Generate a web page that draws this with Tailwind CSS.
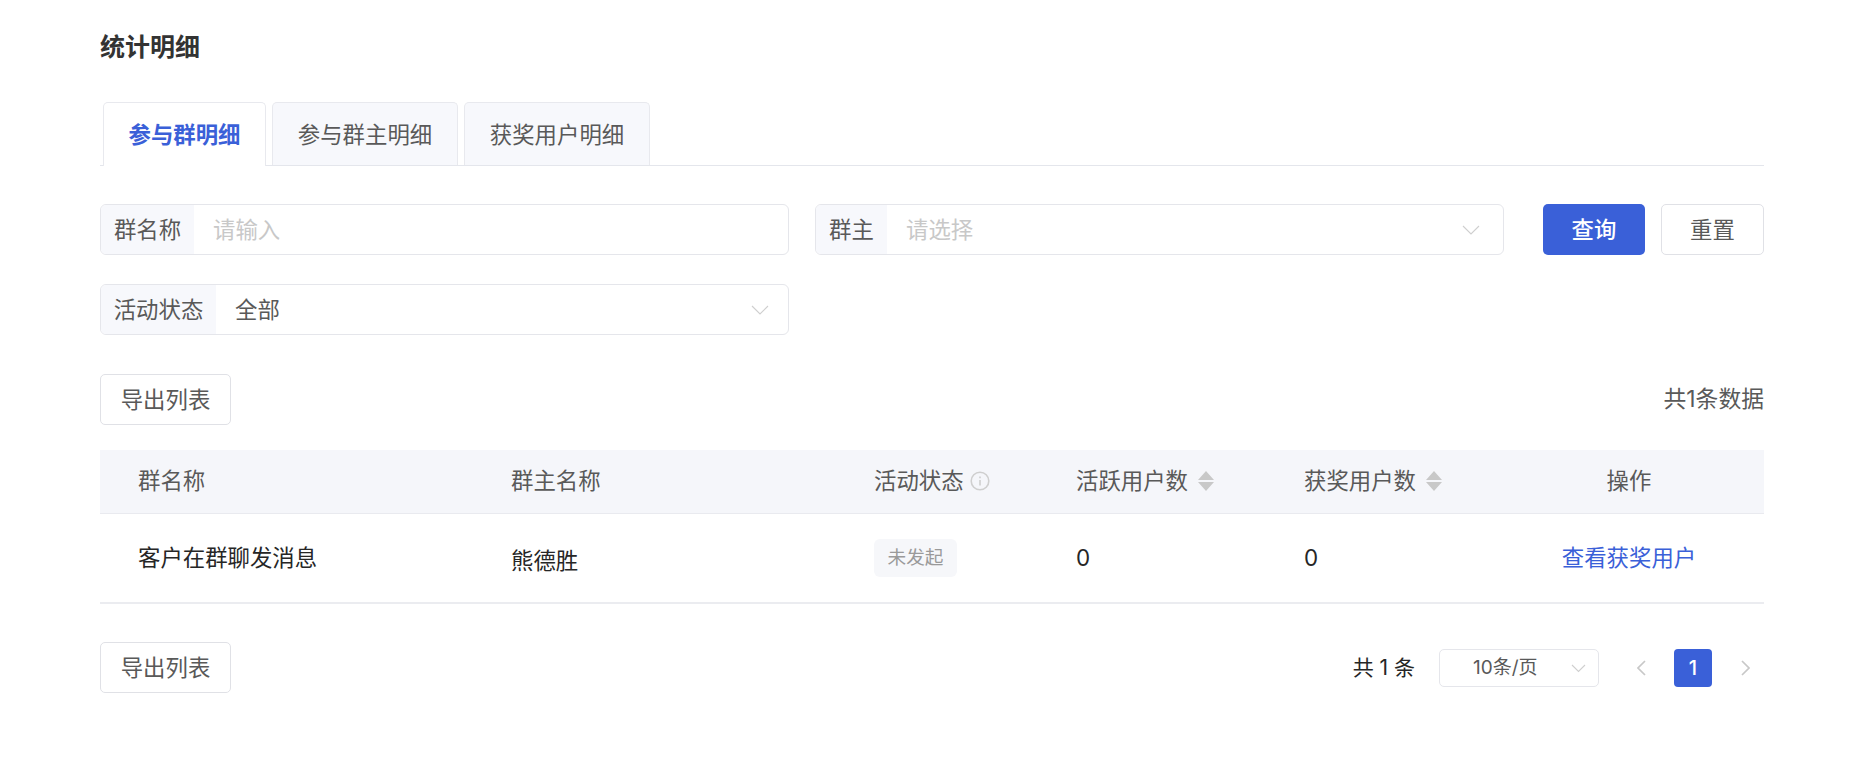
<!DOCTYPE html>
<html lang="zh-CN">
<head>
    <meta charset="UTF-8">
    <title>统计明细</title>
    <script src="https://cdn.jsdelivr.net/npm/@tailwindcss/browser@4"></script>
</head>
<body class="bg-white font-['Inter','Noto_Sans_CJK_SC',sans-serif] text-[22.4px] text-[#595959]">
    <div class="ml-[100px] w-[1664px] pt-[31px]">
        <h1 class="h-[32px] text-[25px] leading-[32px] font-semibold text-[#333333]">统计明细</h1>

        <!-- Tabs -->
        <div class="mt-[39px] flex h-[64px] gap-[6px] border-b border-[#e4e6ec] pl-[3px]">
            <div class="relative h-[64px] w-[163px] rounded-t-[5px] border border-b-0 border-[#e8e9ee] bg-white text-center leading-[64px] font-semibold text-[#3a60d8]">参与群明细</div>
            <div class="h-[63px] w-[186px] rounded-t-[5px] border border-b-0 border-[#e8e9ee] bg-[#f7f8fc] text-center leading-[64px]">参与群主明细</div>
            <div class="h-[63px] w-[186px] rounded-t-[5px] border border-b-0 border-[#e8e9ee] bg-[#f7f8fc] text-center leading-[64px]">获奖用户明细</div>
        </div>

        <!-- Filters -->
        <div class="mt-[38px] flex h-[51px]">
            <div class="flex w-[689px] overflow-hidden rounded-[6px] border border-[#e5e6eb]">
                <div class="flex w-[93px] items-center justify-center bg-[#f7f8fc]">群名称</div>
                <div class="flex flex-1 items-center pl-[19px] text-[#c8c8c8]">请输入</div>
            </div>
            <div class="ml-[26px] flex w-[689px] overflow-hidden rounded-[6px] border border-[#e5e6eb]">
                <div class="flex w-[71px] items-center justify-center bg-[#f7f8fc]">群主</div>
                <div class="flex flex-1 items-center justify-between pr-[22px] pl-[19px] text-[#c8c8c8]">
                    <span>请选择</span>
                    <svg width="20" height="12" viewBox="0 0 20 12" fill="none" stroke="#cfcfcf" stroke-width="1.1"><path d="M2 2l8 8 8-8"/></svg>
                </div>
            </div>
            <button class="ml-[39px] h-[51px] w-[102px] rounded-[5px] bg-[#3a60d8] font-medium text-white">查询</button>
            <button class="ml-[16px] h-[51px] w-[103px] rounded-[5px] border border-[#e0e1e6] bg-white">重置</button>
        </div>
        <div class="mt-[29px] flex h-[51px] w-[689px] overflow-hidden rounded-[6px] border border-[#e5e6eb]">
            <div class="flex w-[115px] items-center justify-center bg-[#f7f8fc]">活动状态</div>
            <div class="flex flex-1 items-center justify-between pr-[18px] pl-[19px]">
                <span>全部</span>
                <svg width="20" height="12" viewBox="0 0 20 12" fill="none" stroke="#cfcfcf" stroke-width="1.1"><path d="M2 2l8 8 8-8"/></svg>
            </div>
        </div>

        <div class="mt-[39px] flex h-[51px] items-center justify-between">
            <button class="h-[51px] w-[131px] rounded-[5px] border border-[#e0e1e6] bg-white">导出列表</button>
            <span class="text-[22.8px]">共1条数据</span>
        </div>

        <!-- Table -->
        <table class="mt-[25px] w-full table-fixed border-collapse">
            <colgroup>
                <col class="w-[373px]"><col class="w-[364px]"><col class="w-[201px]"><col class="w-[228px]"><col class="w-[228px]"><col class="w-[270px]">
            </colgroup>
            <thead>
                <tr class="h-[63px] border-b border-[#e9eaef] bg-[#f5f6fa] text-left">
                    <th class="pl-[38px] font-normal">群名称</th>
                    <th class="pl-[38px] font-normal">群主名称</th>
                    <th class="pl-[37px] font-normal">
                        <span class="flex items-center gap-[6px]">活动状态
                            <svg width="20" height="20" viewBox="0 0 20 20" fill="none" stroke="#cfcfcf" stroke-width="1.6"><circle cx="10" cy="10" r="8.8"/><path d="M10 9v5.5M10 5.5v1.7"/></svg>
                        </span>
                    </th>
                    <th class="pl-[38px] font-normal">
                        <span class="flex items-center gap-[10px]">活跃用户数
                            <svg width="16" height="20" viewBox="0 0 16 20" fill="#c8c8c8"><path d="M8 0l8 9H0zM0 11h16l-8 9z"/></svg>
                        </span>
                    </th>
                    <th class="pl-[38px] font-normal">
                        <span class="flex items-center gap-[10px]">获奖用户数
                            <svg width="16" height="20" viewBox="0 0 16 20" fill="#c8c8c8"><path d="M8 0l8 9H0zM0 11h16l-8 9z"/></svg>
                        </span>
                    </th>
                    <th class="text-center font-normal">操作</th>
                </tr>
            </thead>
            <tbody>
                <tr class="h-[90px] border-b-2 border-[#ebecf0] text-[#262626]">
                    <td class="pl-[38px]">客户在群聊发消息</td>
                    <td class="pl-[38px]"><span class="relative top-[3px]">熊德胜</span></td>
                    <td class="pl-[37px]"><span class="inline-block h-[38px] w-[83px] rounded-[6px] bg-[#f6f7fa] text-center text-[18.67px] leading-[38px] text-[#9a9a9a]">未发起</span></td>
                    <td class="pl-[38px]">0</td>
                    <td class="pl-[38px]">0</td>
                    <td class="text-center text-[#3a60d8]">查看获奖用户</td>
                </tr>
            </tbody>
        </table>

        <!-- Footer -->
        <div class="mt-[38px] flex h-[51px] items-start justify-between">
            <button class="h-[51px] w-[131px] rounded-[5px] border border-[#e0e1e6] bg-white">导出列表</button>
            <div class="flex items-center pt-[7px] text-[#262626]">
                <span class="text-[21px]">共 1 条</span>
                <div class="ml-[24px] flex h-[38px] w-[160px] items-center rounded-[5px] border border-[#e5e6eb] pr-[12px] pl-[33px] text-[19px] text-[#595959]">
                    <span>10条/页</span>
                    <svg class="ml-auto" width="15" height="9" viewBox="0 0 15 9" fill="none" stroke="#cfcfcf" stroke-width="1.1"><path d="M1 1l6.5 6.5L14 1"/></svg>
                </div>
                <svg class="ml-[38px]" width="9" height="16" viewBox="0 0 9 16" fill="none" stroke="#c8c8c8" stroke-width="1.7"><path d="M8 1L1 8l7 7"/></svg>
                <div class="ml-[28px] h-[38px] w-[38px] rounded-[4px] bg-[#3a60d8] text-center text-[20px] leading-[38px] font-medium text-white">1</div>
                <svg class="ml-[29px]" width="9" height="16" viewBox="0 0 9 16" fill="none" stroke="#c8c8c8" stroke-width="1.7"><path d="M1 1l7 7-7 7"/></svg>
                <div class="w-[14px]"></div>
            </div>
        </div>
    </div>
</body>
</html>
